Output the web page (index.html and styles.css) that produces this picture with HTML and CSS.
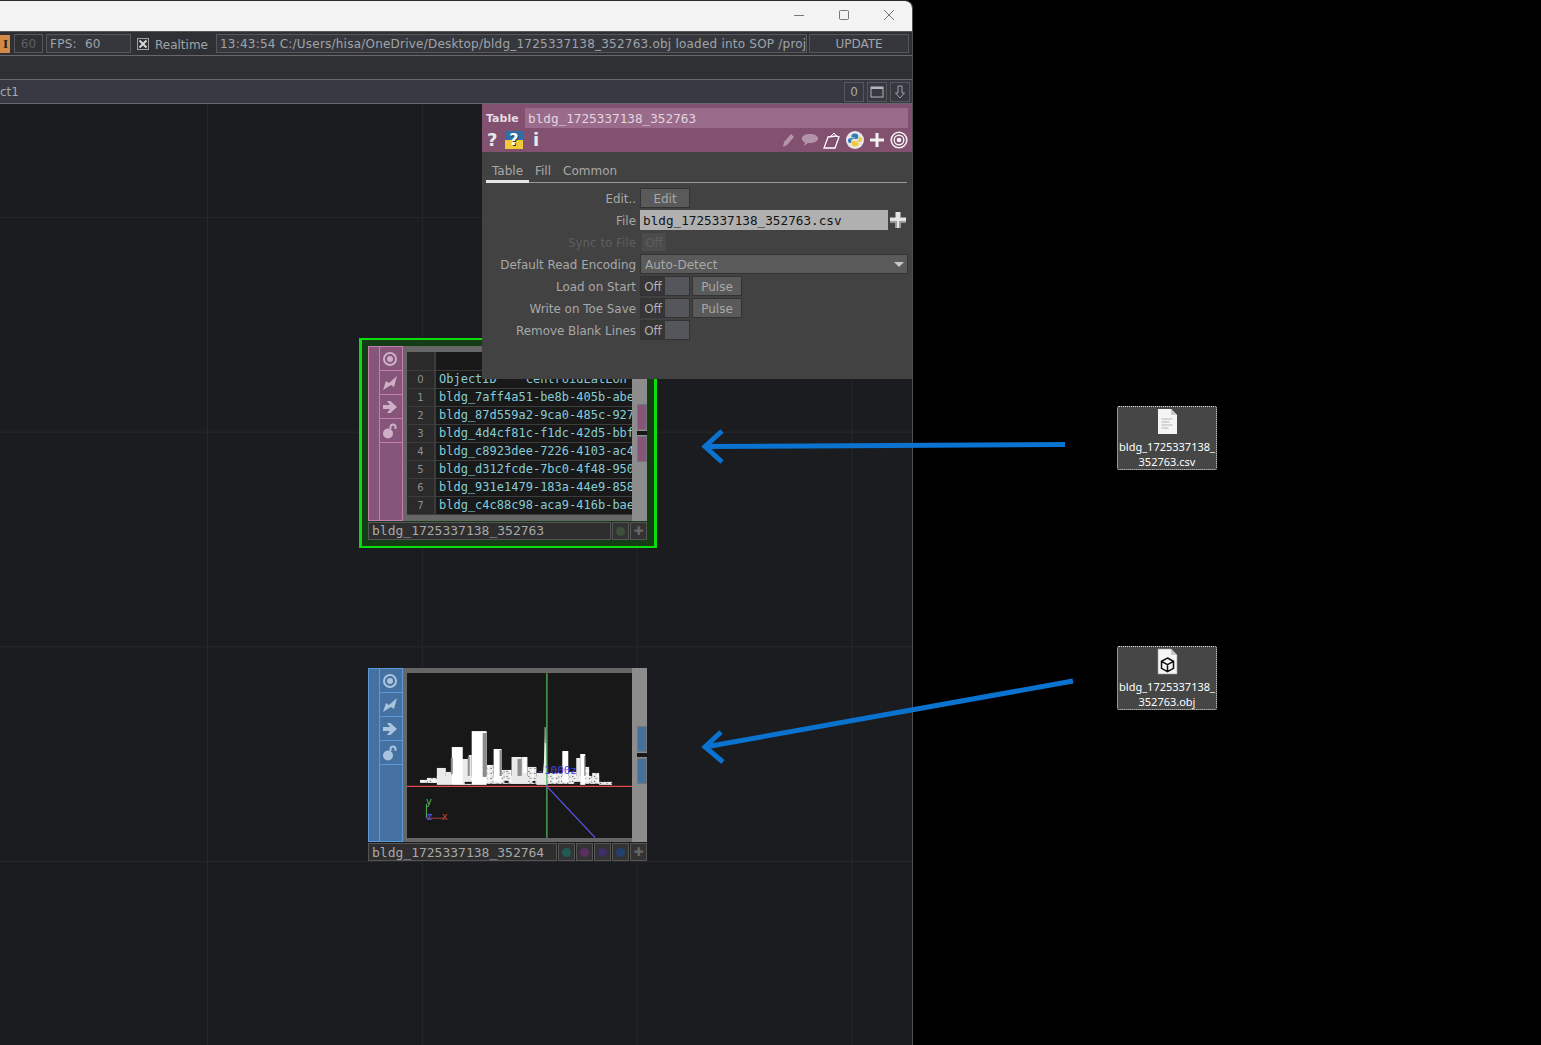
FILE: index.html
```html
<!DOCTYPE html>
<html>
<head>
  <meta charset="UTF-8">
  <title>TouchDesigner</title>
  <link rel="stylesheet" href="styles.css">
</head>

<body>
  <div class="window">

    <div class="titlebar">
      <svg class="winbtn" width="12" height="12" viewBox="0 0 12 12"><path d="M1 6.500h10" stroke="#777" fill="none"/></svg>
      <svg class="winbtn" width="12" height="12" viewBox="0 0 12 12"><rect x="1.500" y="1.500" width="9" height="9" rx="1" stroke="#777" fill="none"/></svg>
      <svg class="winbtn" width="12" height="12" viewBox="0 0 12 12"><path d="M1 1l10 10M11 1L1 11" stroke="#777" fill="none"/></svg>
    </div>

    <div class="toolbar">
      <div class="tool-i">I</div>
      <div class="tool-box tool-60">60</div>
      <div class="tool-box tool-fps">FPS:&nbsp; 60</div>
      <div class="check">
        <svg width="10" height="10" viewBox="0 0 10 10"><path d="M1.500 1.500l7 7M8.500 1.500l-7 7" stroke="#d8d8d8" stroke-width="2" fill="none"/></svg>
      </div>
      <div class="tool-label">Realtime</div>
      <div class="tool-box tool-msg">13:43:54 C:/Users/hisa/OneDrive/Desktop/bldg_1725337138_352763.obj loaded into SOP /project1</div>
      <div class="tool-box tool-update">UPDATE</div>
    </div>

    <div class="toolbar-empty"></div>

    <div class="pathbar">
      <div class="path-text">ct1</div>
      <div class="path-btn">0</div>
      <div class="path-btn">
        <svg width="14" height="12" viewBox="0 0 14 12"><rect x="1" y="1" width="12" height="10" fill="none" stroke="#b5b5b5"/><path d="M1 2h12" stroke="#b5b5b5" stroke-width="2"/></svg>
      </div>
      <div class="path-btn">
        <svg width="12" height="14" viewBox="0 0 12 14"><path d="M4 1h4v7h2.500L6 13 1.500 8H4z" fill="none" stroke="#a0a0a0"/></svg>
      </div>
    </div>

    <div class="canvas">

      <div class="selected-frame"></div>

      <!-- table DAT -->
      <div class="node node-table">
        <div class="node-top">
          <div class="strip">
            <div class="strip-edge"></div>
            <div class="strip-icons">
              <div class="strip-cell"><svg width="16" height="16" viewBox="0 0 16 16"><circle cx="8" cy="8" r="6" fill="none" stroke="#cfafc6" stroke-width="2"/><circle cx="8" cy="8" r="3" fill="#cfafc6"/></svg></div>
              <div class="strip-cell"><svg width="16" height="16" viewBox="0 0 16 16"><path d="M1 15l3-9 3 2 8-7-3 11-3-2z" fill="#cfafc6"/></svg></div>
              <div class="strip-cell"><svg width="16" height="16" viewBox="0 0 16 16"><path d="M1 6h7L5 2h3.500L15 8l-6.500 6H5l3-4H1z" fill="#cfafc6"/></svg></div>
              <div class="strip-cell"><svg width="16" height="16" viewBox="0 0 16 16"><circle cx="6" cy="10.500" r="5" fill="#cfafc6"/><path d="M8.500 6V4a2.500 2.500 0 0 1 5 0v2" fill="none" stroke="#cfafc6" stroke-width="2"/></svg></div>
              <div class="strip-fill"></div>
            </div>
          </div>
          <div class="node-body">
            <div class="dat-table">
              <div class="dat-row dat-head"><div class="dat-idx"></div><div class="dat-cell"></div></div>
              <div class="dat-row"><div class="dat-idx">0</div><div class="dat-cell">ObjectID&nbsp;&nbsp;&nbsp;&nbsp;centroidLatLon</div></div>
              <div class="dat-row"><div class="dat-idx">1</div><div class="dat-cell">bldg_7aff4a51-be8b-405b-abe3</div></div>
              <div class="dat-row"><div class="dat-idx">2</div><div class="dat-cell">bldg_87d559a2-9ca0-485c-9271</div></div>
              <div class="dat-row"><div class="dat-idx">3</div><div class="dat-cell">bldg_4d4cf81c-f1dc-42d5-bbf1</div></div>
              <div class="dat-row"><div class="dat-idx">4</div><div class="dat-cell">bldg_c8923dee-7226-4103-ac42</div></div>
              <div class="dat-row"><div class="dat-idx">5</div><div class="dat-cell">bldg_d312fcde-7bc0-4f48-950c</div></div>
              <div class="dat-row"><div class="dat-idx">6</div><div class="dat-cell">bldg_931e1479-183a-44e9-8584</div></div>
              <div class="dat-row"><div class="dat-idx">7</div><div class="dat-cell">bldg_c4c88c98-aca9-416b-bae1</div></div>
            </div>
          </div>
          <div class="side">
            <div class="side-btn side-btn-a"></div>
            <div class="side-gap"></div>
            <div class="side-btn"></div>
          </div>
        </div>
        <div class="namebar">
          <div class="name">bldg_1725337138_352763</div>
          <div class="name-btn"><span class="dot dot-green"></span></div>
          <div class="name-btn"><span class="plus">✚</span></div>
        </div>
      </div>

      <!-- geometry COMP -->
      <div class="node node-geo">
        <div class="node-top">
          <div class="strip">
            <div class="strip-edge"></div>
            <div class="strip-icons">
              <div class="strip-cell"><svg width="16" height="16" viewBox="0 0 16 16"><circle cx="8" cy="8" r="6" fill="none" stroke="#a9c4de" stroke-width="2"/><circle cx="8" cy="8" r="3" fill="#a9c4de"/></svg></div>
              <div class="strip-cell"><svg width="16" height="16" viewBox="0 0 16 16"><path d="M1 15l3-9 3 2 8-7-3 11-3-2z" fill="#a9c4de"/></svg></div>
              <div class="strip-cell"><svg width="16" height="16" viewBox="0 0 16 16"><path d="M1 6h7L5 2h3.500L15 8l-6.500 6H5l3-4H1z" fill="#a9c4de"/></svg></div>
              <div class="strip-cell"><svg width="16" height="16" viewBox="0 0 16 16"><circle cx="6" cy="10.500" r="5" fill="#a9c4de"/><path d="M8.500 6V4a2.500 2.500 0 0 1 5 0v2" fill="none" stroke="#a9c4de" stroke-width="2"/></svg></div>
              <div class="strip-fill"></div>
            </div>
          </div>
          <div class="node-body">
            <svg class="viewer" viewBox="407 673 226 165" width="226" height="165">
              <defs>
                <pattern id="speckle" width="11" height="5" patternUnits="userSpaceOnUse">
                  <rect width="11" height="5" fill="#ececec"/>
                  <rect x="1" y="1" width="1" height="1" fill="#3a3a3a"/>
                  <rect x="7" y="3" width="1" height="1" fill="#3a3a3a"/>
                  <rect x="4" y="0" width="2" height="2" fill="#fff"/>
                  <rect x="9" y="1" width="1" height="2" fill="#a0a0a0"/>
                  <rect x="2" y="3" width="2" height="1" fill="#a0a0a0"/>
                </pattern>
              </defs>
              <!-- low blocks along the base -->
              <g fill="url(#speckle)">
                <rect x="420" y="780" width="20" height="3"/>
                <rect x="427" y="778" width="12" height="5"/>
                <rect x="437" y="776" width="163" height="8"/>
                <rect x="487" y="765" width="7" height="18"/>
                <rect x="502" y="770" width="10" height="13"/>
                <rect x="528" y="767" width="9" height="17"/>
                <rect x="548" y="773" width="15" height="10"/>
                <rect x="569" y="772" width="8" height="12"/>
                <rect x="586" y="767" width="4" height="16"/>
                <rect x="593" y="773" width="7" height="10"/>
                <rect x="600" y="782" width="13" height="3"/>
              </g>
              <g fill="#eaeaea">
                <rect x="437" y="768" width="9" height="17"/>
                <rect x="446" y="772" width="6" height="13"/>
                <rect x="462" y="759" width="8" height="26"/>
                <rect x="469" y="755" width="3" height="30"/>
                <rect x="512" y="757" width="10" height="27"/>
                <rect x="522" y="757" width="6" height="27"/>
                <rect x="537" y="773" width="11" height="12"/>
                <rect x="577" y="758" width="4" height="26"/>
                <path d="M545 742l1.500-15 1 40 1 7h-5l1-12z"/>
              </g>
              <g fill="#fff">
                <rect x="452" y="747" width="11" height="38"/>
                <rect x="472" y="731" width="15" height="54"/>
                <rect x="494" y="749" width="8" height="33"/>
                <rect x="563" y="751" width="6" height="31"/>
                <rect x="581" y="754" width="5" height="31"/>
                <rect x="524" y="757" width="3" height="16"/>
              </g>
              <g fill="#8c8c8c">
                <rect x="451" y="758" width="2" height="16"/>
                <rect x="483" y="733" width="4" height="44"/>
                <rect x="500" y="750" width="2" height="26"/>
                <rect x="545" y="727" width="1.500" height="16"/>
                <rect x="518" y="759" width="4" height="17"/>
                <rect x="468" y="757" width="2" height="19"/>
                <rect x="585" y="756" width="1" height="20"/>
              </g>
              <g fill="#181818">
                <rect x="465" y="782" width="7" height="2"/>
                <rect x="505" y="781" width="4" height="2"/>
                <rect x="533" y="781" width="3" height="2"/>
                <rect x="575" y="782" width="6" height="2"/>
              </g>
              <path d="M547.500 673v165" stroke="#57b45a" stroke-width="1.300"/>
              <path d="M407 786.500h226" stroke="#e4484d" stroke-width="1.300"/>
              <path d="M547 786l49 52" stroke="#5a55e6" stroke-width="1.300"/>
              <text class="viewer-label" x="538" y="774">-1000z</text>
              <path d="M426.500 804v14" stroke="#57b45a"/>
              <path d="M426.500 818.500h17" stroke="#a8403f"/>
              <path d="M426 818l4-4" stroke="#5a55e6"/>
              <text class="axis-y" x="426" y="805">y</text>
              <text class="axis-z" x="427" y="820">z</text>
              <text class="axis-x" x="442" y="820">x</text>
            </svg>
          </div>
          <div class="side">
            <div class="side-btn side-btn-a"></div>
            <div class="side-gap"></div>
            <div class="side-btn"></div>
          </div>
        </div>
        <div class="namebar">
          <div class="name">bldg_1725337138_352764</div>
          <div class="name-btn"><span class="dot dot-teal"></span></div>
          <div class="name-btn"><span class="dot dot-pink"></span></div>
          <div class="name-btn"><span class="dot dot-purple"></span></div>
          <div class="name-btn"><span class="dot dot-blue"></span></div>
          <div class="name-btn"><span class="plus">✚</span></div>
        </div>
      </div>

      <!-- parameter dialog -->
      <div class="panel">
        <div class="panel-head">
          <div class="head-row">
            <div class="head-type">Table</div>
            <div class="head-name">bldg_1725337138_352763</div>
          </div>
          <div class="head-icons">
            <span class="glyph">?</span>
            <div class="py-help">?</div>
            <span class="glyph glyph-i">i</span>
            <div class="head-spacer"></div>
            <svg class="head-icon" width="16" height="16" viewBox="0 0 16 16"><path d="M2 15l1-5 7-8 3 3-7 8z" fill="#b393a9"/></svg>
            <svg class="head-icon head-icon-tight" width="18" height="14" viewBox="0 0 18 14"><path d="M9 1c5 0 8 1.800 8 4.500S14 10 9 10H7l-4 3 1-3.500C2 9 1 7.500 1 5.500 1 2.800 4 1 9 1z" fill="#b393a9"/></svg>
            <svg class="head-icon head-icon-tight" width="17" height="17" viewBox="0 0 17 17"><path d="M5 5l8-1 3 1-4 11H1z" fill="none" stroke="#fff" stroke-width="1.300"/><path d="M8 4l3-3 3 4" fill="none" stroke="#fff"/></svg>
            <svg class="head-icon" width="18" height="18" viewBox="0 0 18 18"><circle cx="9" cy="9" r="9" fill="#e6e6e6"/><path d="M9 2.500c-2.500 0-3.500 1-3.500 2.500v1.500H9v.7H4c-1.500 0-2 1.200-2 2.300s.5 2.500 2 2.500h1.200V10c0-1 1-2 2-2h3.300c1 0 1.700-.7 1.700-1.700V5c0-1.500-1.200-2.500-3.200-2.500z" fill="#2f7ab5"/><path d="M9 15.500c2.500 0 3.500-1 3.500-2.500v-1.500H9v-.7h5c1.500 0 2-1.200 2-2.300s-.5-2.500-2-2.500h-1.200V8c0 1-1 2-2 2H7.500c-1 0-1.700.7-1.700 1.700V13c0 1.500 1.200 2.500 3.200 2.500z" fill="#f2c83a"/></svg>
            <svg class="head-icon" width="14" height="14" viewBox="0 0 14 14"><path d="M5.500 0h3v5.500H14v3H8.500V14h-3V8.500H0v-3h5.500z" fill="#f0f0f0"/></svg>
            <svg class="head-icon" width="18" height="18" viewBox="0 0 18 18"><circle cx="9" cy="9" r="7.800" fill="none" stroke="#f0f0f0" stroke-width="1.600"/><circle cx="9" cy="9" r="4.800" fill="none" stroke="#f0f0f0" stroke-width="1.400"/><circle cx="9" cy="9" r="2.300" fill="#f0f0f0"/></svg>
          </div>
        </div>

        <div class="tabs">
          <div class="tab tab-active">Table</div>
          <div class="tab">Fill</div>
          <div class="tab">Common</div>
        </div>

        <div class="params">
          <div class="param">
            <div class="param-label">Edit..</div>
            <div class="btn btn-edit">Edit</div>
          </div>
          <div class="param">
            <div class="param-label">File</div>
            <div class="file-field">bldg_1725337138_352763.csv</div>
            <svg class="file-plus" width="16" height="16" viewBox="0 0 16 16"><path d="M5.500 0h5v5.500H16v5h-5.500V16h-5v-5.500H0v-5h5.500z" fill="#e4e4e4"/><path d="M0 10.500h5.500V16h5v-5.500H16V9H9v7H7V9H0z" fill="#9a9a9a"/></svg>
          </div>
          <div class="param param-dim">
            <div class="param-label">Sync to File</div>
            <div class="sync-off">Off</div>
          </div>
          <div class="param">
            <div class="param-label">Default Read Encoding</div>
            <div class="select">
              <span>Auto-Detect</span>
              <span class="caret"></span>
            </div>
          </div>
          <div class="param">
            <div class="param-label">Load on Start</div>
            <div class="toggle"><div class="toggle-off">Off</div><div class="toggle-on"></div></div>
            <div class="btn btn-pulse">Pulse</div>
          </div>
          <div class="param">
            <div class="param-label">Write on Toe Save</div>
            <div class="toggle"><div class="toggle-off">Off</div><div class="toggle-on"></div></div>
            <div class="btn btn-pulse">Pulse</div>
          </div>
          <div class="param">
            <div class="param-label">Remove Blank Lines</div>
            <div class="toggle"><div class="toggle-off">Off</div><div class="toggle-on"></div></div>
          </div>
        </div>
      </div>

    </div>
  </div>

  <!-- desktop -->
  <div class="desk-icon desk-csv">
    <svg width="24" height="28" viewBox="0 0 24 28">
      <path d="M3 1h13l6 6v19H3z" fill="#f5f5f5"/>
      <path d="M16 1l6 6h-6z" fill="#c8c8c8"/>
      <path d="M6.500 11h11M6.500 14h8M6.500 17h11M6.500 20h7" stroke="#b5b5b5" stroke-width="1.200"/>
    </svg>
    <div class="desk-text">bldg_1725337138_<br>352763.csv</div>
  </div>

  <div class="desk-icon desk-obj">
    <svg width="24" height="28" viewBox="0 0 24 28">
      <path d="M3 1h13l6 6v19H3z" fill="#f5f5f5" stroke="#9a9a9a" stroke-width=".6"/>
      <path d="M16 1l6 6h-6z" fill="#c8c8c8"/>
      <path d="M12.500 10l6 3.300v7l-6 3.400-6-3.400v-7zM6.500 13.300l6 3.400 6-3.400M12.500 16.700v7" fill="none" stroke="#111" stroke-width="1.500"/>
    </svg>
    <div class="desk-text">bldg_1725337138_<br>352763.obj</div>
  </div>

  <svg class="arrows" width="1541" height="1045" viewBox="0 0 1541 1045">
    <path d="M1065 444.500L705 446.500M722 431l-17 15.500 17 15.500" fill="none" stroke="#0a72cf" stroke-width="5"/>
    <path d="M1073 681L705 747M721 732l-16 15 18 15" fill="none" stroke="#0a72cf" stroke-width="5"/>
  </svg>
</body>

</html>
```

FILE: styles.css
```css
html, body {
  margin: 0;
  height: 100%;
}

body {
  position: relative;
  width: 1541px;
  height: 1045px;
  overflow: hidden;
  background-color: #000;
  font-family: 'DejaVu Sans', sans-serif;
  font-size: 12px;
  color: #a8a8a8;
}

.window {
  display: flex;
  flex-direction: column;
  width: 913px;
  height: 1045px;
  box-sizing: border-box;
  border-top: 1px solid #2a2a2a;
  border-right: 1px solid #4c4e52;
  border-top-right-radius: 8px;
  overflow: hidden;
}

.titlebar {
  display: flex;
  justify-content: flex-end;
  align-items: center;
  gap: 33px;
  flex: 0 0 30px;
  padding: 0 17px 2px 0;
  box-sizing: border-box;
  background: #f3f3f3;
}

.toolbar {
  display: flex;
  align-items: center;
  flex: 0 0 25px;
  box-sizing: border-box;
  background: #2f3034;
  border-top: 1px solid #55575b;
  border-bottom: 1px solid #66686c;
  color: #a0a4aa;
}

.tool-i {
  width: 10px;
  height: 18px;
  background: #d48a44;
  color: #222;
  font-family: 'Liberation Serif', serif;
  font-weight: bold;
  font-size: 13px;
  line-height: 18px;
  text-align: center;
  box-sizing: border-box;
  padding-left: 1px;
  margin-right: 4px;
}

.tool-box {
  box-sizing: border-box;
  height: 19px;
  line-height: 19px;
  border: 1px solid #55575b;
  background: #35373c;
  white-space: nowrap;
  overflow: hidden;
}

.tool-60 {
  width: 29px;
  margin-right: 3px;
  color: #5f6166;
  text-align: center;
  background: #2f3034;
}

.tool-fps {
  width: 85px;
  padding-left: 3px;
  margin-right: 6px;
  letter-spacing: 0.25px;
}

.check {
  display: flex;
  align-items: center;
  justify-content: center;
  box-sizing: border-box;
  width: 12px;
  height: 12px;
  border: 1px solid #a0a0a0;
  margin-right: 6px;
}

.tool-label {
  width: 61px;
  padding-top: 2px;
}

.tool-msg {
  width: 591px;
  padding-left: 3px;
  margin-right: 2px;
  letter-spacing: 0.22px;
}

.tool-update {
  width: 100px;
  text-align: center;
}

.toolbar-empty {
  flex: 0 0 24px;
  background: #2f3034;
  box-sizing: border-box;
  border-bottom: 1px solid #66686c;
}

.pathbar {
  display: flex;
  align-items: center;
  gap: 3px;
  flex: 0 0 24px;
  box-sizing: border-box;
  padding-right: 2px;
  background: #363941;
  border-bottom: 1px solid #66686c;
}

.path-text {
  flex: 1;
  color: #a8a8a8;
}

.path-btn {
  display: flex;
  align-items: center;
  justify-content: center;
  box-sizing: border-box;
  width: 20px;
  height: 20px;
  border: 1px solid #55575b;
  color: #a8a8a8;
}

/* network area, nodes sit freely on it */
.canvas {
  position: relative;
  flex: 1;
  background-color: #1a1c20;
  background-image:
    linear-gradient(to right, #25272b 1px, transparent 1px),
    linear-gradient(to bottom, #25272b 1px, transparent 1px);
  background-size: 214.9px 214.67px;
  background-position: 207px 113px;
}

.selected-frame {
  position: absolute;
  left: 359px;
  top: 234px;
  width: 298px;
  height: 210px;
  box-sizing: border-box;
  border: solid #0bdc0b;
  border-width: 2px 3px;
  background: #143d16;
}

.node {
  position: absolute;
  left: 368px;
  width: 279px;
  display: flex;
  flex-direction: column;
  --strip: #85557a;
  --strip-line: #c77cb2;
}

.node-table {
  top: 242px;
}

.node-table .node-top {
  height: 175px;
}

.node-table .node-body {
  padding-top: 6px;
}

.node-geo {
  top: 564px;
  --strip: #44719f;
  --strip-line: #5a9ad8;
}

.node-geo .node-top {
  height: 174px;
}

.node-geo .name {
  line-height: 18px;
}

.node-top {
  display: flex;
}

.strip {
  display: flex;
  flex: 0 0 35px;
  box-sizing: border-box;
  background: var(--strip);
  border: 1px solid var(--strip-line);
}

.strip-edge {
  width: 10px;
  border-right: 1px solid var(--strip-line);
}

.strip-icons {
  flex: 1;
  display: flex;
  flex-direction: column;
}

.strip-cell {
  display: flex;
  align-items: center;
  justify-content: center;
  height: 22px;
  padding: 1px 2px 0 0;
  border-bottom: 1px solid var(--strip-line);
}

.node-body {
  flex: 1;
  display: flex;
  background: #666;
  padding: 5px 0 4px 4px;
  min-width: 0;
}

.dat-table {
  flex: 1;
  min-width: 0;
  background: #3c3c3c;
  overflow: hidden;
  height: 163px;
}

.dat-row {
  display: flex;
  height: 18px;
  box-sizing: border-box;
  border-bottom: 1px solid #3c3c3c;
}

.dat-head {
  height: 19px;
}

.dat-idx {
  flex: 0 0 27px;
  margin-right: 2px;
  background: #2a2a2a;
  color: #8f8f8f;
  font-size: 10px;
  line-height: 18px;
  text-align: center;
}

.dat-cell {
  flex: 1;
  min-width: 0;
  background: #191919;
  padding-left: 3px;
  overflow: hidden;
  white-space: nowrap;
  font-family: 'DejaVu Sans Mono', monospace;
  font-size: 12px;
  line-height: 17px;
  color: #86ccd8;
}

.viewer {
  display: block;
  background: #181818;
}

.viewer-label {
  font-family: 'DejaVu Sans Mono', monospace;
  font-size: 11px;
  fill: #4a44e6;
}

.axis-y, .axis-z, .axis-x {
  font-family: 'DejaVu Sans', sans-serif;
  font-size: 10px;
}

.axis-y { fill: #57b45a; }
.axis-z { fill: #5a55e6; }
.axis-x { fill: #c04444; }

.side {
  flex: 0 0 15px;
  display: flex;
  flex-direction: column;
  box-sizing: border-box;
  padding-left: 5px;
  background: #8c8c8c;
}

.side-btn {
  height: 26px;
  box-sizing: border-box;
  background: var(--strip);
  border: 1px solid #777;
  margin-top: 1px;
}

.side-btn-a {
  margin-top: 58px;
}

.side-gap {
  height: 4px;
  background: #17181a;
  margin-top: 1px;
}

.namebar {
  display: flex;
  gap: 1px;
  height: 18px;
  margin-top: 1px;
}

.name {
  flex: 1;
  min-width: 0;
  box-sizing: border-box;
  padding-left: 3px;
  background: #2e2e2e;
  border: 1px solid #555;
  color: #a8a8a8;
  font-family: 'DejaVu Sans Mono', monospace;
  font-size: 13px;
  line-height: 16px;
  white-space: nowrap;
}

.name-btn {
  display: flex;
  align-items: center;
  justify-content: center;
  box-sizing: border-box;
  width: 17px;
  border: 1px solid #555;
  background: #333;
}

.dot {
  width: 9px;
  height: 9px;
  border-radius: 50%;
}

.dot-green { background: #3c503c; }
.dot-teal { background: #245a56; }
.dot-pink { background: #5a2f60; }
.dot-purple { background: #3d2f66; }
.dot-blue { background: #22406e; }

.plus {
  color: #666;
  font-size: 12px;
  line-height: 1;
}

/* parameter dialog */
.panel {
  position: absolute;
  left: 482px;
  top: 0;
  width: 430px;
  height: 275px;
  background: #424242;
}

.panel-head {
  height: 48px;
  background: #81516f;
  box-sizing: border-box;
  padding-top: 4px;
}

.head-row {
  display: flex;
  align-items: center;
  height: 20px;
  padding-left: 4px;
}

.head-type {
  width: 39px;
  color: #e6dbe3;
  font-size: 11px;
  font-weight: bold;
}

.head-name {
  width: 383px;
  height: 20px;
  box-sizing: border-box;
  padding-left: 3px;
  background: #9a6b8a;
  color: #e2d6df;
  font-family: 'DejaVu Sans Mono', monospace;
  font-size: 12.7px;
  line-height: 21px;
}

.head-icons {
  display: flex;
  align-items: center;
  height: 24px;
  padding: 0 4px 0 5px;
}

.glyph {
  width: 18px;
  color: #e8e8e8;
  font-size: 18px;
  font-weight: bold;
  line-height: 22px;
}

.glyph-i {
  margin-left: 10px;
  width: auto;
}

.py-help {
  width: 18px;
  height: 18px;
  background: linear-gradient(to bottom, #2f6fa8 50%, #f2c83a 50%);
  color: #fff;
  font-size: 16px;
  font-weight: bold;
  line-height: 18px;
  text-align: center;
  text-shadow: 1px 1px 0 #333;
}

.head-spacer {
  flex: 1;
}

.head-icon {
  display: block;
  margin-left: 6px;
}

.head-icon-tight {
  margin-left: 4px;
}

.tabs {
  display: flex;
  gap: 6px;
  height: 31px;
  box-sizing: border-box;
  margin: 0 5px 0 4px;
  padding-top: 10px;
  border-bottom: 1px solid #9a9a9a;
}

.tab {
  color: #a8a8a8;
  line-height: 19px;
}

.tab:nth-child(3) {
  margin-left: 6px;
}

.tab-active {
  box-sizing: border-box;
  width: 43px;
  padding-left: 6px;
  height: 21px;
  border-bottom: 3px solid #e6e6e6;
}

.params {
  display: flex;
  flex-direction: column;
  gap: 2px;
  padding-top: 5px;
}

.param {
  display: flex;
  align-items: center;
  height: 20px;
}

.param-label {
  flex: 0 0 154px;
  margin-right: 4px;
  padding-top: 1px;
  text-align: right;
  white-space: nowrap;
  font-size: 11.9px;
  color: #a8a8a8;
}

.param-dim .param-label {
  color: #5e5e5e;
}

.btn {
  box-sizing: border-box;
  height: 20px;
  line-height: 20px;
  background: #5a5a5a;
  border: 1px solid #333;
  color: #a8a8a8;
  text-align: center;
}

.btn-edit {
  width: 50px;
}

.btn-pulse {
  width: 50px;
  margin-left: 2px;
}

.file-field {
  width: 248px;
  height: 20px;
  box-sizing: border-box;
  padding-left: 3px;
  background: #b0b0b0;
  color: #141414;
  font-family: 'DejaVu Sans Mono', monospace;
  font-size: 12.7px;
  line-height: 21px;
}

.file-plus {
  margin-left: 2px;
}

.sync-off {
  width: 24px;
  height: 18px;
  margin-left: 2px;
  background: #4b4b4b;
  color: #5e5e5e;
  line-height: 20px;
  text-align: center;
}

.select {
  display: flex;
  justify-content: space-between;
  align-items: center;
  box-sizing: border-box;
  width: 268px;
  height: 20px;
  padding: 1px 3px 0 4px;
  background: #5a5a5a;
  border: 1px solid #333;
  color: #a8a8a8;
}

.caret {
  width: 0;
  height: 0;
  border-left: 5px solid transparent;
  border-right: 5px solid transparent;
  border-top: 5px solid #c8c8c8;
}

.toggle {
  display: flex;
  box-sizing: border-box;
  width: 50px;
  height: 20px;
  border: 1px solid #333;
}

.toggle-off {
  width: 24px;
  background: #363636;
  color: #b0b0b0;
  line-height: 20px;
  text-align: center;
}

.toggle-on {
  flex: 1;
  background: #55555c;
}

/* desktop */
.desk-icon {
  position: absolute;
  left: 1117px;
  width: 100px;
  height: 64px;
  box-sizing: border-box;
  display: flex;
  flex-direction: column;
  align-items: center;
  padding-top: 1px;
  background: #464646;
  border: 1px dotted #e0e0e0;
  border-radius: 2px;
}

.desk-csv {
  top: 406px;
}

.desk-obj {
  top: 646px;
}

.desk-text {
  color: #fff;
  font-family: 'Noto Sans', sans-serif;
  font-size: 11px;
  line-height: 15px;
  text-align: center;
  white-space: nowrap;
  margin-top: 3px;
}

.arrows {
  position: absolute;
  left: 0;
  top: 0;
  pointer-events: none;
}
```
